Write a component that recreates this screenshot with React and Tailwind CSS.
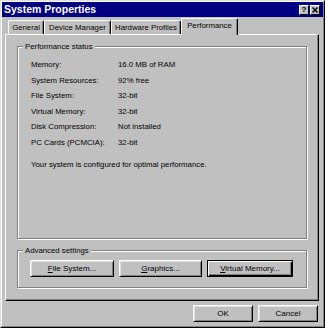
import React, { useState } from "react";

const font = { fontFamily: '"Liberation Sans", Arial, sans-serif' };

// classic 3D bevel button
function Btn({ children, width, isDefault = false }) {
  return (
    <button
      className={`${width} h-[17px] bg-[#c0c0c0] text-[8px] leading-none text-black flex items-center justify-center ${
        isDefault
          ? "border border-black shadow-[inset_1px_1px_0_#ffffff,inset_-1px_-1px_0_#000000,inset_-2px_-2px_0_#808080]"
          : "border border-t-white border-l-white border-r-black border-b-black shadow-[inset_1px_1px_0_#dfdfdf,inset_-1px_-1px_0_#808080]"
      }`}
    >
      {children}
    </button>
  );
}

function Tab({ label, width, active }) {
  return (
    <div
      className={`${width} flex items-center justify-center text-[7.8px] leading-none text-black bg-[#c0c0c0] rounded-t-[2px] border-t border-l border-r border-t-white border-l-white border-r-black shadow-[inset_-1px_0_0_#808080] ${
        active ? "h-[17px] -mb-px z-10 relative pb-[2px]" : "h-[14px]"
      }`}
    >
      {label}
    </div>
  );
}

const status = [
  ["Memory:", "16.0 MB of RAM"],
  ["System Resources:", "92% free"],
  ["File System:", "32-bit"],
  ["Virtual Memory:", "32-bit"],
  ["Disk Compression:", "Not installed"],
  ["PC Cards (PCMCIA):", "32-bit"],
];

export default function App() {
  const [tab] = useState("Performance");

  return (
    <div
      className="w-[325px] h-[328px] bg-[#c0c0c0] border border-t-[#dfdfdf] border-l-[#dfdfdf] border-r-black border-b-black"
      style={font}
    >
      <div className="h-full border border-t-white border-l-white border-r-[#808080] border-b-[#808080] flex flex-col">
        {/* Title bar */}
        <div className="h-[15px] bg-[#000080] flex items-center justify-between pl-[2px] pr-[3px]">
          <span className="text-white font-bold text-[10.5px] leading-none">System Properties</span>
          <div className="flex gap-[1px]">
            <div className="w-[10px] h-[10px] bg-[#c0c0c0] border border-t-white border-l-white border-r-black border-b-black flex items-center justify-center text-[8px] font-bold leading-none text-black">
              ?
            </div>
            <div className="w-[10px] h-[10px] bg-[#c0c0c0] border border-t-white border-l-white border-r-black border-b-black flex items-center justify-center">
              <svg width="6" height="6" viewBox="0 0 6 6">
                <path d="M0.5 0.5 L5.5 5.5 M5.5 0.5 L0.5 5.5" stroke="black" strokeWidth="1.5" />
              </svg>
            </div>
          </div>
        </div>

        {/* Tabs */}
        <div className="mt-[1px] h-[16px] flex items-end pl-[6px]">
          <Tab label="General" width="w-[36px]" active={tab === "General"} />
          <Tab label="Device Manager" width="w-[67px]" active={tab === "Device Manager"} />
          <Tab label="Hardware Profiles" width="w-[70px]" active={tab === "Hardware Profiles"} />
          <Tab label="Performance" width="w-[57px]" active={tab === "Performance"} />
        </div>

        {/* Tab panel */}
        <div className="ml-[3px] w-[314px] h-[267px] border border-t-white border-l-white border-r-black border-b-black shadow-[inset_-1px_-1px_0_#808080] px-[11px] pt-[11px]">
          {/* Performance status */}
          <div className="relative h-[193px] border border-[#808080] shadow-[1px_1px_0_#ffffff,inset_1px_1px_0_#ffffff] pl-[13px] pt-[10px]">
            <span className="absolute -top-[5px] left-[5px] px-[2px] bg-[#c0c0c0] text-[7.8px] leading-[9px] text-black">
              Performance status
            </span>
            <div className="grid grid-cols-[87px_1fr] text-[7.8px] leading-[15.6px] text-black">
              {status.map(([k, v]) => (
                <React.Fragment key={k}>
                  <span>{k}</span>
                  <span>{v}</span>
                </React.Fragment>
              ))}
            </div>
            <p className="mt-[6px] text-[7.8px] leading-[15.6px] text-black">
              Your system is configured for optimal performance.
            </p>
          </div>

          {/* Advanced settings */}
          <div className="relative mt-[11px] h-[38px] border border-[#808080] shadow-[1px_1px_0_#ffffff,inset_1px_1px_0_#ffffff] pl-[12px] pt-[9px] flex gap-[5px]">
            <span className="absolute -top-[5px] left-[5px] px-[2px] bg-[#c0c0c0] text-[7.8px] leading-[9px] text-black">
              Advanced settings
            </span>
            <Btn width="w-[84px]">
              <span><u>F</u>ile System...</span>
            </Btn>
            <Btn width="w-[83px]">
              <span><u>G</u>raphics...</span>
            </Btn>
            <Btn width="w-[86px]" isDefault>
              <span><u>V</u>irtual Memory...</span>
            </Btn>
          </div>
        </div>

        {/* Dialog buttons */}
        <div className="mt-[4px] flex justify-end gap-[5px] pr-[5px]">
          <Btn width="w-[60px]">OK</Btn>
          <Btn width="w-[60px]">Cancel</Btn>
        </div>
      </div>
    </div>
  );
}
